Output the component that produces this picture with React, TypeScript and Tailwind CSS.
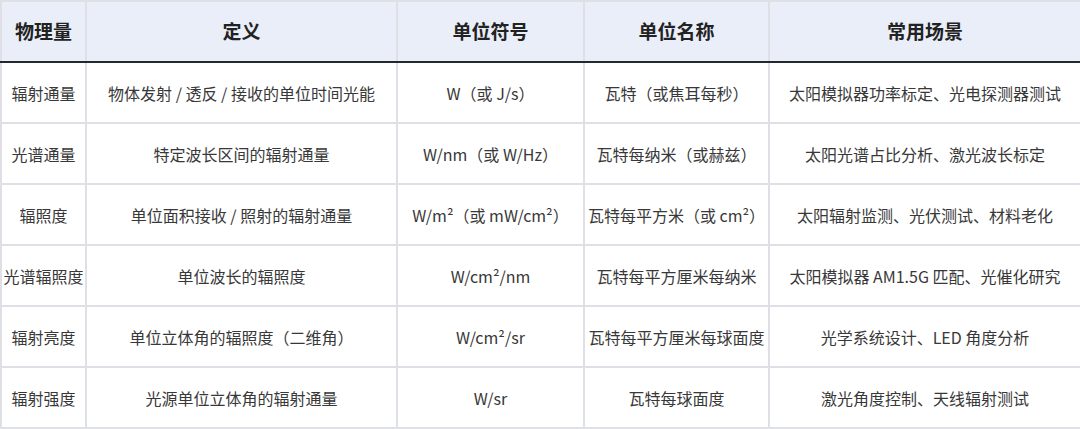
import React from "react";

const header = ["物理量", "定义", "单位符号", "单位名称", "常用场景"];
const rows: string[][] = [
  ["辐射通量", "物体发射 / 透反 / 接收的单位时间光能", "W（或 J/s）", "瓦特（或焦耳每秒）", "太阳模拟器功率标定、光电探测器测试"],
  ["光谱通量", "特定波长区间的辐射通量", "W/nm（或 W/Hz）", "瓦特每纳米（或赫兹）", "太阳光谱占比分析、激光波长标定"],
  ["辐照度", "单位面积接收 / 照射的辐射通量", "W/m²（或 mW/cm²）", "瓦特每平方米（或 cm²）", "太阳辐射监测、光伏测试、材料老化"],
  ["光谱辐照度", "单位波长的辐照度", "W/cm²/nm", "瓦特每平方厘米每纳米", "太阳模拟器 AM1.5G 匹配、光催化研究"],
  ["辐射亮度", "单位立体角的辐照度（二维角）", "W/cm²/sr", "瓦特每平方厘米每球面度", "光学系统设计、LED 角度分析"],
  ["辐射强度", "光源单位立体角的辐射通量", "W/sr", "瓦特每球面度", "激光角度控制、天线辐射测试"],
];

export default function App() {
  return (
    <div
      className="w-[1080px] h-[429px] bg-white overflow-hidden"
      style={{ fontFamily: '"Noto Sans CJK SC", "Noto Sans", sans-serif' }}
    >
      <table className="table-fixed border-collapse w-[1080px]">
        <colgroup>
          <col className="w-[85px]" />
          <col className="w-[311px]" />
          <col className="w-[187px]" />
          <col className="w-[185px]" />
          <col className="w-[312px]" />
        </colgroup>
        <thead>
          <tr className="h-[61px] bg-[#e9eef8]">
            {header.map((h, i) => (
              <th
                key={i}
                className="border-2 border-[#dfe0e6] border-b-[#23272f] p-0 text-center align-middle text-[19px] font-bold text-[#222] whitespace-nowrap"
              >
                {h}
              </th>
            ))}
          </tr>
        </thead>
        <tbody>
          {rows.map((r, ri) => (
            <tr key={ri} className="h-[61px]">
              {r.map((c, ci) => (
                <td
                  key={ci}
                  className="border-2 border-[#dfe0e6] p-0 text-center align-middle text-[16px] text-[#383838] whitespace-nowrap"
                >
                  {c}
                </td>
              ))}
            </tr>
          ))}
        </tbody>
      </table>
    </div>
  );
}
